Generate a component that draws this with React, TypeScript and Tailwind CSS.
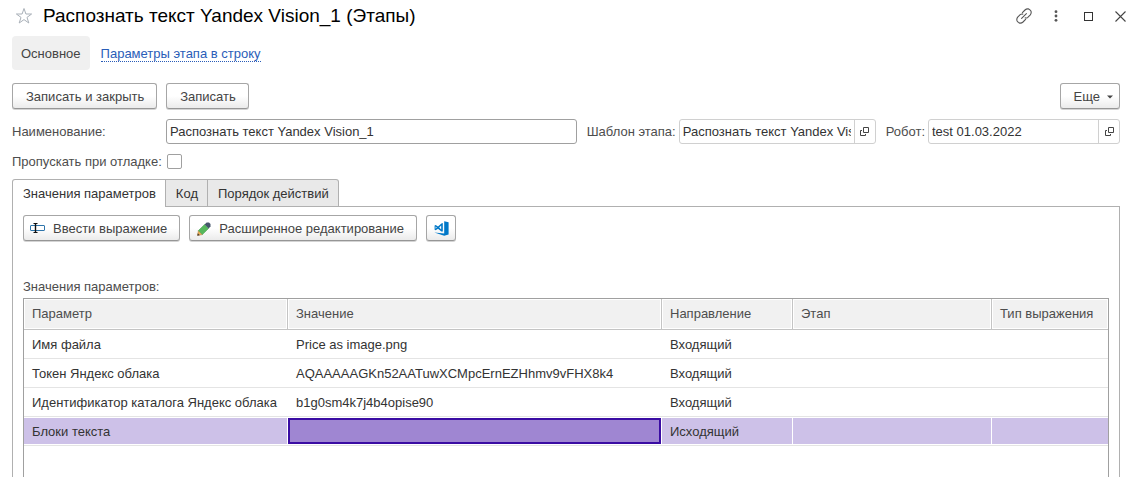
import React, { useState } from "react";

const buttonClass =
  "flex h-[26px] items-center rounded-[3px] border border-[#a6a6a6] border-b-[#969696] bg-linear-to-b from-white from-50% to-[#ebebeb] pt-[2px] text-[#444] shadow-[0_1px_0_#d4d4d4]";

function StarIcon() {
  return (
    <svg width="18" height="18" viewBox="0 0 18 18" fill="none" stroke="#a9b0b8" strokeWidth="1">
      <path d="M9 1.5 L10.9 7 H16.6 L12 10.4 L13.8 16 L9 12.6 L4.2 16 L6 10.4 L1.4 7 H7.1 Z" />
    </svg>
  );
}

function LinkIcon() {
  return (
    <svg width="16" height="16" viewBox="0 0 16 16" fill="none" stroke="#555" strokeWidth="1.1" strokeLinecap="round" className="shrink-0">
      <path d="M6.4 4.6 L9 2 Q10.5 0.6 12.3 0.9 L13.7 1.6 L14.9 3 Q15.7 5 14.3 6.8 L11.8 9.3 Q10.6 10.3 9.2 9.9" />
      <path d="M9.6 11.4 L7 14 Q5.5 15.4 3.7 15.1 L2.3 14.4 L1.1 13 Q0.3 11 1.7 9.2 L4.2 6.7 Q5.4 5.7 6.8 6.1" />
      <path d="M5.6 10.4 L10.4 5.6" />
    </svg>
  );
}

function DotsIcon() {
  return (
    <svg width="4" height="12" viewBox="0 0 4 12" fill="#555">
      <circle cx="2" cy="1.7" r="1.4" />
      <circle cx="2" cy="6" r="1.4" />
      <circle cx="2" cy="10.3" r="1.4" />
    </svg>
  );
}

function MaximizeIcon() {
  return (
    <svg width="9" height="9" viewBox="0 0 9 9" fill="none" stroke="#333">
      <rect x="0.5" y="0.5" width="8" height="8" />
    </svg>
  );
}

function CloseIcon() {
  return (
    <svg width="11" height="11" viewBox="0 0 11 11" fill="none" stroke="#444" strokeWidth="1.1">
      <path d="M0.5 0.5 L10.5 10.5 M10.5 0.5 L0.5 10.5" />
    </svg>
  );
}

function OpenIcon() {
  return (
    <svg width="9" height="9" viewBox="0 0 9 9" fill="none" stroke="#444" className="shrink-0">
      <path d="M3.5 0.5 H8.5 V5.5 H3.5 Z M2 3.5 H0.5 V8.5 H5.5 V7" />
    </svg>
  );
}

function ExpressionIcon() {
  return (
    <svg width="15" height="11" viewBox="0 0 15 11" fill="none" className="mb-px">
      <rect x="0.5" y="2.5" width="14" height="5" rx="0.5" fill="#fff" stroke="#2f75ab" />
      <path d="M3.5 0.5 H7.5 M3.5 9.5 H7.5" stroke="#111" />
      <path d="M5.5 0.5 V9.5" stroke="#111" strokeWidth="1.4" />
    </svg>
  );
}

function PencilIcon() {
  return (
    <svg width="14" height="14" viewBox="0 0 14 14" className="mb-px">
      <path d="M0.6 13.3 L1.4 8.6 L5.4 12.6 Z" fill="#f3b35c" stroke="#a87434" strokeWidth="0.5" />
      <path d="M0.3 13.7 L0.8 11.2 L2.8 13.2 Z" fill="#4a3a2a" />
      <path d="M1.4 8.6 L7.6 2.4 L11.6 6.4 L5.4 12.6 Z" fill="#56b85c" stroke="#3f9a4a" strokeWidth="0.5" />
      <path d="M7.6 2.4 L9.6 0.5 H12 L13.5 2 V4.5 L11.6 6.4 Z" fill="#46566b" />
    </svg>
  );
}

function CodeIcon() {
  return (
    <svg width="15" height="15" viewBox="0 0 15 15" fill="#0078c8" className="mb-[2px]">
      <path d="M10.2 0.2 L14.6 1.2 V13.4 L10.2 14.8 L0.4 11.6 L10.2 12.6 Z" />
      <path
        fillRule="evenodd"
        d="M8.8 2 V10.6 L7.4 10.4 L4 7.7 L1.7 9.3 L0.6 8.7 V4.5 L1.7 3.9 L4 5.5 L7.4 2.4 Z M7.2 4.6 L5.2 6.6 L7.2 8.5 Z M1.6 5.4 V7.8 L2.8 6.6 Z"
      />
    </svg>
  );
}

function LookupField({ id, label, value, width }: { id: string; label: string; value: string; width: string }) {
  return (
    <div className="flex items-center">
      <label htmlFor={id} className="mr-[3px] whitespace-nowrap text-[#4d4d4d]">
        {label}
      </label>
      <div className={"flex h-[25px] rounded-[3px] border border-[#d0d0d0] " + width}>
        <input id={id} defaultValue={value} className="mr-[3px] ml-[3px] min-w-0 flex-1 bg-transparent outline-none" />
        <button type="button" aria-label={"Открыть: " + label} className="flex w-[21px] items-center justify-center border-l border-[#d0d0d0]">
          <OpenIcon />
        </button>
      </div>
    </div>
  );
}

const tabs = ["Значения параметров", "Код", "Порядок действий"];

const columns = ["Параметр", "Значение", "Направление", "Этап", "Тип выражения"];

const rows = [
  ["Имя файла", "Price as image.png", "Входящий", "", ""],
  ["Токен Яндекс облака", "AQAAAAAGKn52AATuwXCMpcErnEZHhmv9vFHX8k4", "Входящий", "", ""],
  ["Идентификатор каталога Яндекс облака", "b1g0sm4k7j4b4opise90", "Входящий", "", ""],
  ["Блоки текста", "", "Исходящий", "", ""],
];

export default function App() {
  const [tab, setTab] = useState(0);
  const [selected, setSelected] = useState(3);

  return (
    <div className="flex min-h-screen flex-col bg-white pr-[10px] pl-3 font-['Liberation_Sans',Arial,sans-serif] text-[13px] leading-4 text-[#333]">
      <header className="flex h-8 items-center">
        <button type="button" aria-label="Добавить в избранное" className="ml-[3px]">
          <StarIcon />
        </button>
        <h1 className="ml-[10px] flex-1 text-[19px] leading-6 text-black">Распознать текст Yandex Vision_1 (Этапы)</h1>
        <div className="-mr-[10px] flex items-center gap-3">
          <button type="button" aria-label="Получить ссылку" className="flex w-5 justify-center">
            <LinkIcon />
          </button>
          <button type="button" aria-label="Дополнительно" className="flex w-5 justify-center">
            <DotsIcon />
          </button>
          <button type="button" aria-label="Развернуть" className="flex w-5 justify-center">
            <MaximizeIcon />
          </button>
          <button type="button" aria-label="Закрыть" className="flex w-5 justify-center">
            <CloseIcon />
          </button>
        </div>
      </header>

      <nav className="mt-1 flex h-[34px] items-center">
        <a href="#main" className="flex h-full items-center rounded-[4px] bg-[#f0f0f0] px-[9px] pt-[2px] text-[#444]">
          Основное
        </a>
        <a href="#stage" className="mt-[2px] ml-[11px] border-b border-dotted border-[#2a5db8] leading-[14px] text-[#2a5db8]">
          Параметры этапа в строку
        </a>
      </nav>

      <div className="mt-[13px] flex gap-[9px]">
        <button type="button" className={buttonClass + " pr-3 pl-[13px]"}>
          Записать и закрыть
        </button>
        <button type="button" className={buttonClass + " pr-3 pl-[13px]"}>
          Записать
        </button>
        <button type="button" className={buttonClass + " ml-auto gap-[7px] pr-[6px] pl-[13px]"}>
          Еще
          <svg width="6" height="4" viewBox="0 0 6 4" fill="#444">
            <path d="M0 0.5 H6 L3 3.5 Z" />
          </svg>
        </button>
      </div>

      <div className="mt-[10px] flex items-center gap-[10px]">
        <div className="flex min-w-0 flex-1 items-center">
          <label htmlFor="name" className="w-[154px] shrink-0 text-[#4d4d4d]">
            Наименование:
          </label>
          <input id="name" defaultValue="Распознать текст Yandex Vision_1" className="h-[25px] min-w-0 flex-1 rounded-[3px] border border-[#a0a0a0] px-[3px] outline-none" />
        </div>
        <LookupField id="template" label="Шаблон этапа:" value="Распознать текст Yandex Vision_1" width="w-[197px]" />
        <LookupField id="robot" label="Робот:" value="test 01.03.2022" width="w-[192px]" />
      </div>

      <div className="mt-[10px] flex h-[15px] items-center">
        <label htmlFor="skip" className="w-[155px] shrink-0 whitespace-nowrap text-[#4d4d4d]">
          Пропускать при отладке:
        </label>
        <input id="skip" type="checkbox" className="h-[15px] w-[15px] appearance-none rounded-[2px] border border-[#a0a0a0] checked:bg-[#4d4d4d]" />
      </div>

      <div role="tablist" className="mt-[10px] flex">
        {tabs.map((name, i) => (
          <button
            key={name}
            type="button"
            role="tab"
            aria-selected={tab === i}
            onClick={() => setTab(i)}
            className={
              "relative h-7 border-t border-r border-[#b0b0b0] pr-[9px] pl-[10px] first:rounded-tl-[3px] first:border-l last:rounded-tr-[3px] " +
              (tab === i ? "z-10 bg-white" : "border-b bg-[#e9e9e9] pt-px")
            }
          >
            {name}
          </button>
        ))}
      </div>

      <main className="-mt-px flex flex-1 flex-col border border-b-0 border-[#b0b0b0] px-[10px] pt-2">
        <div className="flex gap-[9px]">
          <button type="button" className={buttonClass + " gap-2 pr-3 pl-[6px]"}>
            <ExpressionIcon />
            Ввести выражение
          </button>
          <button type="button" className={buttonClass + " gap-2 pr-3 pl-[7px]"}>
            <PencilIcon />
            Расширенное редактирование
          </button>
          <button type="button" aria-label="Открыть в редакторе кода" className={buttonClass + " w-[30px] justify-center"}>
            <CodeIcon />
          </button>
        </div>

        <div id="params" className="mt-[38px] text-[#4d4d4d]">
          Значения параметров:
        </div>

        <div className="mt-[3px] flex-1 border border-b-0 border-[#a0a0a0]">
          <table aria-labelledby="params" className="w-full table-fixed border-separate border-spacing-0">
            <colgroup>
              <col className="w-[264px]" />
              <col />
              <col className="w-[131px]" />
              <col className="w-[199px]" />
              <col className="w-[116px]" />
            </colgroup>
            <thead>
              <tr className="h-[31px]">
                {columns.map((name) => (
                  <th
                    key={name}
                    className="border-r border-b border-[#c4c4c4] bg-[#f1f1f1] p-0 pl-2 text-left font-normal whitespace-nowrap text-[#4d4d4d] shadow-[inset_0_0_0_1px_white] last:border-r-0"
                  >
                    {name}
                  </th>
                ))}
              </tr>
            </thead>
            <tbody>
              {rows.map((row, r) => (
                <tr key={row[0]} className="h-[29px]" onClick={() => setSelected(r)}>
                  {row.map((value, c) => (
                    <td key={c} className="border-b border-[#e4e4e4] p-0 py-px">
                      <div
                        className={
                          "flex h-[26px] items-center pt-[2px] whitespace-nowrap " +
                          (selected !== r
                            ? "pl-2"
                            : c === 1
                              ? "mr-px border-2 border-[#3a0ca3] bg-[#9f86d2] pl-[6px]"
                              : c === 4
                                ? "bg-[#cdc1e8] pl-2"
                                : "mr-px bg-[#cdc1e8] pl-2")
                        }
                      >
                        {value}
                      </div>
                    </td>
                  ))}
                </tr>
              ))}
            </tbody>
          </table>
        </div>
      </main>
    </div>
  );
}
